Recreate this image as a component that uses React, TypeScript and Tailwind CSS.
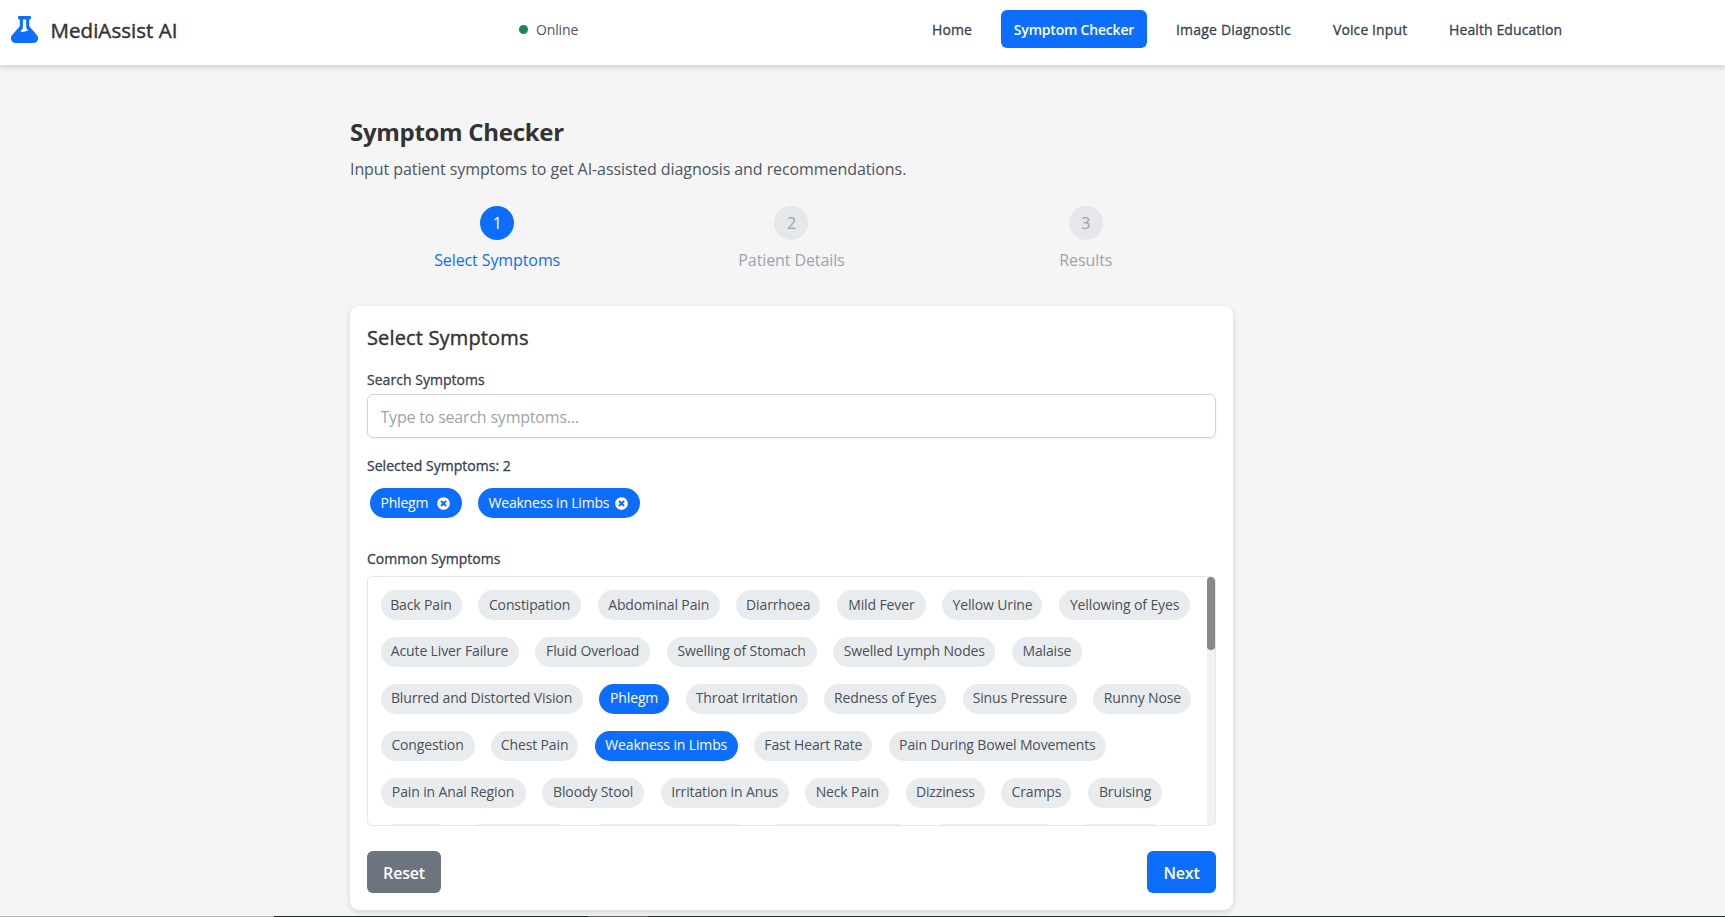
import React from 'react';
import { FaTimesCircle } from 'react-icons/fa';

type Chip = { label: string; width: string; selected?: boolean };

const rows: Chip[][] = [
  [
    { label: 'Back Pain', width: 'w-[81px]' },
    { label: 'Constipation', width: 'w-[103px]' },
    { label: 'Abdominal Pain', width: 'w-[122px]' },
    { label: 'Diarrhoea', width: 'w-[84px]' },
    { label: 'Mild Fever', width: 'w-[89px]' },
    { label: 'Yellow Urine', width: 'w-[100px]' },
    { label: 'Yellowing of Eyes', width: 'w-[131px]' },
  ],
  [
    { label: 'Acute Liver Failure', width: 'w-[138px]' },
    { label: 'Fluid Overload', width: 'w-[115px]' },
    { label: 'Swelling of Stomach', width: 'w-[150px]' },
    { label: 'Swelled Lymph Nodes', width: 'w-[162px]' },
    { label: 'Malaise', width: 'w-[70px]' },
  ],
  [
    { label: 'Blurred and Distorted Vision', width: 'w-[202px]' },
    { label: 'Phlegm', width: 'w-[70px]', selected: true },
    { label: 'Throat Irritation', width: 'w-[122px]' },
    { label: 'Redness of Eyes', width: 'w-[122px]' },
    { label: 'Sinus Pressure', width: 'w-[114px]' },
    { label: 'Runny Nose', width: 'w-[98px]' },
  ],
  [
    { label: 'Congestion', width: 'w-[94px]' },
    { label: 'Chest Pain', width: 'w-[87px]' },
    { label: 'Weakness in Limbs', width: 'w-[143px]', selected: true },
    { label: 'Fast Heart Rate', width: 'w-[118px]' },
    { label: 'Pain During Bowel Movements', width: 'w-[217px]' },
  ],
  [
    { label: 'Pain in Anal Region', width: 'w-[145px]' },
    { label: 'Bloody Stool', width: 'w-[102px]' },
    { label: 'Irritation in Anus', width: 'w-[128px]' },
    { label: 'Neck Pain', width: 'w-[84px]' },
    { label: 'Dizziness', width: 'w-[79px]' },
    { label: 'Cramps', width: 'w-[70px]' },
    { label: 'Bruising', width: 'w-[74px]' },
  ],
  [
    { label: '', width: 'w-[70px]' },
    { label: '', width: 'w-[104px]' },
    { label: '', width: 'w-[161px]' },
    { label: '', width: 'w-[147px]' },
    { label: '', width: 'w-[130px]' },
    { label: '', width: 'w-[92px]' },
  ],
];

const steps = [
  { n: 1, label: 'Select Symptoms', active: true },
  { n: 2, label: 'Patient Details', active: false },
  { n: 3, label: 'Results', active: false },
];

function SymptomChip({ chip }: { chip: Chip }) {
  return (
    <button
      className={`h-[30px] shrink-0 whitespace-nowrap rounded-full pb-px text-center text-sm tracking-[-0.13px] ${chip.width} ${
        chip.selected ? 'bg-[#0d6efd] text-white' : 'bg-[#e9ecef] text-[#495057]'
      }`}
    >
      {chip.label}
    </button>
  );
}

function SelectedTag({ label, width }: { label: string; width: string }) {
  return (
    <span className={`flex h-[30px] items-center justify-between whitespace-nowrap rounded-full bg-[#0d6efd] pl-[10.5px] pr-[12.5px] text-sm tracking-[-0.2px] text-white ${width}`}>
      {label}
      <FaTimesCircle className="size-[13px]" />
    </span>
  );
}

function FieldLabel({ className, children }: { className: string; children: React.ReactNode }) {
  return (
    <div className={`h-5 text-sm leading-5 tracking-[0.03px] text-[#374151] [-webkit-text-stroke:0.3px] ${className}`}>
      {children}
    </div>
  );
}

function FlaskIcon() {
  return (
    <svg viewBox="0 0 27 27" className="mt-px h-[27px] w-[27px] shrink-0" fill="#0d6efd">
      <path
        fillRule="evenodd"
        d="M8.3 0h10.4a1.3 1.3 0 0 1 1.3 1.3v.8a1.3 1.3 0 0 1-1.3 1.3h-.5v6.9l7.6 8.6c2.9 3.3.9 8.1-3.4 8.1H4.6C.3 27-1.7 22.2 1.2 18.9l7.6-8.6V3.4h-.5A1.3 1.3 0 0 1 7 2.1v-.8A1.3 1.3 0 0 1 8.3 0Zm3.600 3.400v7.500c0 .8-.2 1.500-.7 2.100l-1.900 2.600c2.200.8 3.800.2 5.300-.4 1-.4 2-.5 3-.2l-1.600-2c-.5-.6-.8-1.300-.8-2.100V3.400Z"
      />
    </svg>
  );
}

export default function App() {
  return (
    <div className="flex h-[917px] w-[1725px] flex-col overflow-hidden bg-[#f5f5f5] font-['Open_Sans','Noto_Sans',sans-serif]">
      <header className="z-10 flex h-[65px] shrink-0 bg-white pl-[11px] pt-[10px] shadow-[0_2px_6px_rgba(0,0,0,0.18)]">
        <div className="flex h-[38px] w-[508px] items-center">
          <FlaskIcon />
          <span className="ml-[12.5px] mt-px whitespace-nowrap text-[20.5px] leading-7 tracking-[0.05px] text-[#333] [-webkit-text-stroke:0.45px]">MediAssist AI</span>
        </div>
        <div className="flex h-[39px] w-[401px] items-center">
          <span className="size-[9px] rounded-full bg-[#198754]" />
          <span className="ml-2 text-sm tracking-[-0.13px] text-[#4b5563]">Online</span>
        </div>
        <nav className="flex h-[39px] items-center whitespace-nowrap text-sm tracking-[0.1px] text-[#374151] [-webkit-text-stroke:0.3px]">
          <a className="w-[81px] pl-3">Home</a>
          <a className="mb-px h-[38px] w-[146px] rounded-md bg-[#0d6efd] text-center font-semibold leading-[39px] tracking-[-0.2px] text-white [-webkit-text-stroke:0px]">Symptom Checker</a>
          <a className="ml-[29px] w-[157px] tracking-[0.2px]">Image Diagnostic</a>
          <a className="w-[116px]">Voice Input</a>
          <a>Health Education</a>
        </nav>
      </header>

      <main className="h-[851px] shrink-0 pl-[350px] pt-[49px]">
        <h1 className="h-[36px] text-2xl font-bold leading-[36px] tracking-[-0.3px] text-[#333]">Symptom Checker</h1>
        <p className="mt-[7px] h-6 text-base leading-6 tracking-[-0.08px] text-[#4b5563]">
          Input patient symptoms to get AI-assisted diagnosis and recommendations.
        </p>
        <div className="mt-[25px] grid h-[100px] w-[883px] grid-cols-3">
          {steps.map((s) => (
            <div key={s.n} className={`flex flex-col items-center text-base tracking-[-0.1px] ${s.active ? 'text-[#0d6efd]' : 'text-[#9ca3af]'}`}>
              <span className={`flex size-[34px] items-center justify-center rounded-full ${s.active ? 'bg-[#0d6efd] text-white' : 'bg-[#e5e7eb]'}`}>{s.n}</span>
              <span className="mt-2 leading-6">{s.label}</span>
            </div>
          ))}
        </div>

        <section className="flex h-[604px] w-[883px] flex-col rounded-[9px] bg-white pl-[17px] pr-4 shadow-[0_2px_6px_rgba(0,0,0,0.14)]">
          <h2 className="mt-[18px] h-7 text-xl leading-7 tracking-[0.15px] text-[#333] [-webkit-text-stroke:0.4px]">Select Symptoms</h2>
          <FieldLabel className="mt-[18px]">Search Symptoms</FieldLabel>
          <input
            className="mt-[4px] h-[44px] w-[849px] rounded-[6px] border border-[#d1d5db] px-[12.5px] pt-px text-base tracking-[-0.2px] shadow-[0_1px_2px_rgba(0,0,0,0.08)] placeholder:text-[#9ca3af]"
            placeholder="Type to search symptoms..."
          />
          <FieldLabel className="mt-[18px]">Selected Symptoms: 2</FieldLabel>
          <div className="mt-3 flex gap-4 pl-[3px]">
            <SelectedTag label="Phlegm" width="w-[92px]" />
            <SelectedTag label="Weakness in Limbs" width="w-[162px]" />
          </div>
          <FieldLabel className="mt-[31px]">Common Symptoms</FieldLabel>
          <div className="mt-[7px] flex h-[250px] w-[849px] shrink-0 justify-between overflow-hidden rounded-[5px] border border-[#e5e7eb]">
            <div className="flex flex-col gap-[16.9px] pl-[12.5px] pt-[13px]">
              {rows.map((row, i) => (
                <div key={i} className="flex gap-[16.6px]">
                  {row.map((chip, j) => (
                    <SymptomChip key={j} chip={chip} />
                  ))}
                </div>
              ))}
            </div>
            <div className="w-2 shrink-0 bg-[#f1f1f1]">
              <div className="h-[73px] rounded-full bg-[#888]" />
            </div>
          </div>
          <div className="mt-[25px] flex w-[849px] justify-between text-base font-semibold tracking-[-0.2px] text-white">
            <button className="h-[42px] w-[74px] rounded-[6px] bg-[#6c757d] pt-px">Reset</button>
            <button className="h-[42px] w-[69px] rounded-[6px] bg-[#0d6efd] pt-px">Next</button>
          </div>
        </section>
      </main>
      <div className="flex h-px shrink-0">
        <div className="w-[274px] bg-[#bdbdbd]" />
        <div className="w-[314px] bg-[#1c2b27]" />
        <div className="w-[60px] bg-[#5c5c5c]" />
        <div className="flex-1 bg-[#262b2b]" />
      </div>
    </div>
  );
}
